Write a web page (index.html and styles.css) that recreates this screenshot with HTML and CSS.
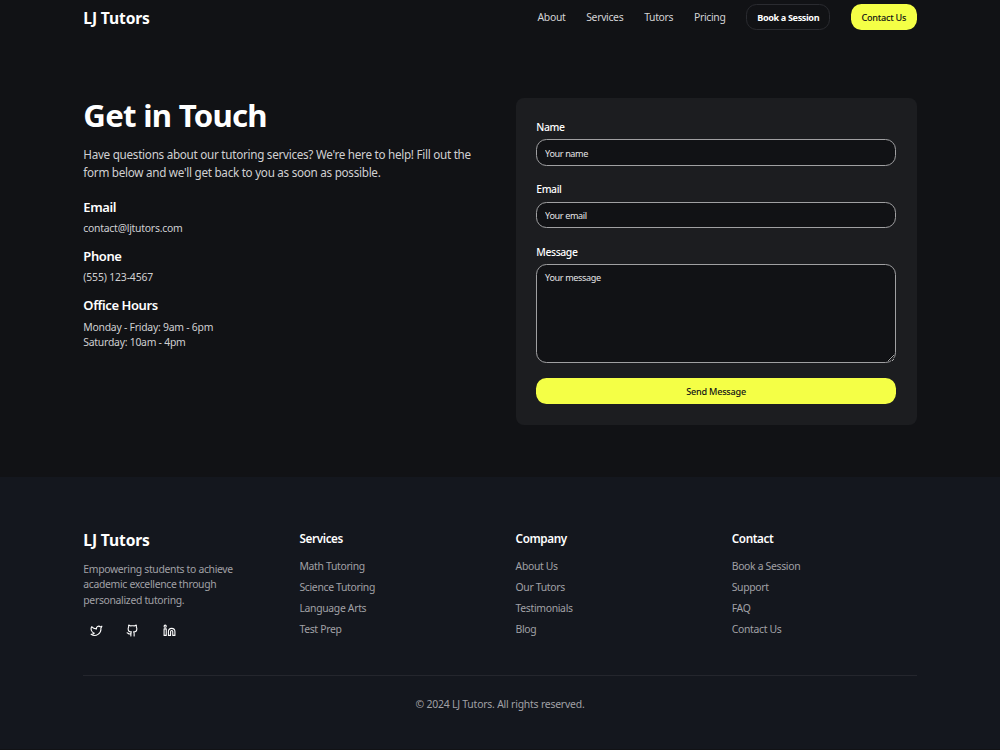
FILE: index.html
```html
<!DOCTYPE html>
<html lang="en">
<head>
    <meta charset="UTF-8">
    <title>LJ Tutors - Contact</title>
    <link rel="stylesheet" href="styles.css">
</head>
<body>

<header class="container navbar">
    <a href="#" class="logo">LJ Tutors</a>
    <nav class="nav-links">
        <a href="#">About</a>
        <a href="#">Services</a>
        <a href="#">Tutors</a>
        <a href="#">Pricing</a>
        <a href="#" class="btn btn-outline">Book a Session</a>
        <a href="#" class="btn btn-primary">Contact Us</a>
    </nav>
</header>

<main class="container contact">
    <section class="contact-info">
        <h1>Get in Touch</h1>
        <p class="lead">Have questions about our tutoring services? We're here to help! Fill out the<br>form below and we'll get back to you as soon as possible.</p>
        <h3>Email</h3>
        <p>contact@ljtutors.com</p>
        <h3>Phone</h3>
        <p class="phone">(555) 123-4567</p>
        <h3>Office Hours</h3>
        <p>Monday - Friday: 9am - 6pm<br>Saturday: 10am - 4pm</p>
    </section>

    <form class="contact-form">
        <label for="name">Name</label>
        <input type="text" id="name" placeholder="Your name">
        <label for="email">Email</label>
        <input type="email" id="email" placeholder="Your email">
        <label for="message">Message</label>
        <textarea id="message" placeholder="Your message"></textarea>
        <button type="button" class="btn btn-primary">Send Message</button>
    </form>
</main>

<footer class="footer">
    <div class="container">
        <div class="footer-grid">
            <div class="footer-brand">
                <a href="#" class="logo">LJ Tutors</a>
                <p>Empowering students to achieve<br>academic excellence through<br>personalized tutoring.</p>
                <div class="social">
                    <a href="#" aria-label="Twitter"><svg viewBox="0 0 24 24"><path d="M22 4s-.7 2.1-2 3.4c1.6 10-9.4 17.3-18 11.6 2.2.1 4.4-.6 6-2C3 15.5.5 9.6 3 5c2.2 2.6 5.6 4.1 9 4-.9-4.2 4-6.6 7-3.8 1.1 0 3-1.2 3-1.2z"/></svg></a>
                    <a href="#" aria-label="GitHub"><svg viewBox="0 0 24 24"><path d="M15 22v-4a4.8 4.8 0 0 0-1-3.5c3 0 6-2 6-5.5.08-1.25-.27-2.48-1-3.5.28-1.15.28-2.35 0-3.5 0 0-1 0-3 1.5-2.64-.5-5.36-.5-8 0C6 2 5 2 5 2c-.3 1.15-.3 2.35 0 3.5A5.403 5.403 0 0 0 4 9c0 3.5 3 5.5 6 5.5-.39.49-.68 1.05-.85 1.65-.17.6-.22 1.23-.15 1.85v4"/><path d="M9 18c-4.51 2-5-2-7-2"/></svg></a>
                    <a href="#" aria-label="LinkedIn"><svg viewBox="0 0 24 24"><path d="M16 8a6 6 0 0 1 6 6v7h-4v-7a2 2 0 0 0-4 0v7h-4v-7a6 6 0 0 1 6-6z"/><rect x="2" y="9" width="4" height="12"/><circle cx="4" cy="4" r="2"/></svg></a>
                </div>
            </div>
            <div class="footer-col">
                <h4>Services</h4>
                <a href="#">Math Tutoring</a>
                <a href="#">Science Tutoring</a>
                <a href="#">Language Arts</a>
                <a href="#">Test Prep</a>
            </div>
            <div class="footer-col">
                <h4>Company</h4>
                <a href="#">About Us</a>
                <a href="#">Our Tutors</a>
                <a href="#">Testimonials</a>
                <a href="#">Blog</a>
            </div>
            <div class="footer-col">
                <h4>Contact</h4>
                <a href="#">Book a Session</a>
                <a href="#">Support</a>
                <a href="#">FAQ</a>
                <a href="#">Contact Us</a>
            </div>
        </div>
        <div class="footer-bottom">&copy; 2024 LJ Tutors. All rights reserved.</div>
    </div>
</footer>

</body>
</html>
```
FILE: styles.css
```css
* {
    box-sizing: border-box;
    margin: 0;
    padding: 0;
}
body {
    background-color: #111215;
    color: #fff;
    font-family: "Noto Sans", sans-serif;
    font-size: 10.4px;
    line-height: 15.6px;
    overflow: hidden;
}
a {
    color: inherit;
    text-decoration: none;
}
.container {
    width: 833.4px;
    margin: 0 auto;
}
.logo {
    display: block;
    font-size: 15.6px;
    font-weight: 700;
    line-height: 20.8px;
    letter-spacing: -0.12px;
    padding-top: 1px;
}
.navbar {
    display: flex;
    justify-content: space-between;
    align-items: center;
    height: 34px;
}
.navbar .logo {
    padding-top: 2px;
}
.nav-links {
    display: flex;
    align-items: center;
    gap: 20.8px;
    color: #d4d4d6;
    letter-spacing: -0.32px;
}
.nav-links a {
    padding-top: 2px;
}
.btn,
.nav-links .btn {
    display: flex;
    align-items: center;
    justify-content: center;
    height: 26px;
    padding: 1px 10.4px 0;
    border: none;
    border-radius: 10.4px;
    font-family: inherit;
    font-size: 9.1px;
    font-weight: 500;
    letter-spacing: -0.23px;
}
.nav-links .btn-outline {
    padding: 1px 10px 0;
    border: 1px solid #2a2b30;
    color: #fff;
    font-weight: 700;
    letter-spacing: -0.37px;
}
.btn-primary {
    background-color: #f4ff46;
    color: #111215;
}
.contact {
    display: grid;
    grid-template-columns: 1fr 401.2px;
    height: 443px;
    padding-top: 64px;
}
.contact-info {
    color: #d0d0d2;
    letter-spacing: -0.24px;
}
.contact-info h1 {
    color: #fff;
    font-size: 31.2px;
    line-height: 34px;
    letter-spacing: -0.74px;
    margin-bottom: 13px;
}
.lead {
    font-size: 11.7px;
    line-height: 18.2px;
    letter-spacing: -0.28px;
    margin-bottom: 16.1px;
}
.contact-info h3 {
    color: #fff;
    font-size: 13px;
    font-weight: 600;
    line-height: 18.2px;
    letter-spacing: -0.4px;
    margin-bottom: 5.4px;
}
.contact-info h3 + p {
    margin-bottom: 10.2px;
}
.contact-info h3 + .phone {
    letter-spacing: -0.14px;
}
.contact-form {
    display: flex;
    flex-direction: column;
    height: 327px;
    padding: 20.8px;
    background-color: #1c1d20;
    border-radius: 8px;
}
.contact-form label {
    font-weight: 500;
    letter-spacing: -0.4px;
    padding-top: 1px;
    margin-bottom: 4px;
}
.contact-form input,
.contact-form textarea {
    height: 26.3px;
    padding: 1.6px 7.8px 0;
    background-color: #111215;
    border: 1px solid #a0a0a2;
    border-radius: 10.4px;
    color: #fff;
    font-family: inherit;
    font-size: 9.1px;
    letter-spacing: -0.38px;
    margin-bottom: 15.6px;
}
.contact-form textarea {
    height: 98.2px;
    padding-top: 5.8px;
    margin-bottom: 15.4px;
}
::placeholder {
    color: #e4e4e6;
}
.footer {
    height: 272px;
    padding-top: 52px;
    background-color: #14171e;
    color: #a1a1a6;
    letter-spacing: -0.32px;
}
.footer-grid {
    display: grid;
    grid-template-columns: repeat(4, 1fr);
    column-gap: 31.2px;
    height: 146px;
}
.footer .logo,
.footer h4 {
    color: #fff;
}
.footer-brand p {
    margin: 11px 0 9.4px;
}
.social {
    display: flex;
    gap: 10.4px;
}
.social a {
    display: flex;
    width: 26px;
    height: 26px;
    align-items: center;
    justify-content: center;
}
.social svg {
    width: 13px;
    height: 13px;
    fill: none;
    stroke: #fff;
    stroke-width: 2;
    stroke-linecap: round;
    stroke-linejoin: round;
}
.footer-col h4 {
    font-size: 11.7px;
    font-weight: 600;
    line-height: 18.2px;
    letter-spacing: -0.37px;
    margin-bottom: 11.8px;
}
.footer-col a {
    display: block;
    margin-bottom: 5.3px;
}
.footer-bottom {
    border-top: 1px solid #24262d;
    padding-top: 21.2px;
    text-align: center;
    letter-spacing: -0.2px;
}
```
